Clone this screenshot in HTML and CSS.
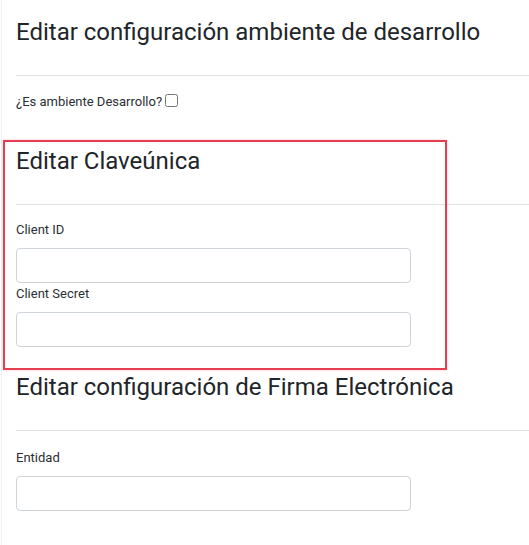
FILE: index.html
```html
<!DOCTYPE html>
<html lang="es">
<head>
<meta charset="utf-8">
<title>Configuración</title>
<link rel="stylesheet" href="styles.css">
</head>
<body>
<div class="page">
  <section class="section section-dev">
    <h2 class="section-title">Editar configuración ambiente de desarrollo</h2>
    <hr class="divider">
    <div class="check-row">
      <label class="field-label" for="esDev">¿Es ambiente Desarrollo?</label>
      <input class="check" type="checkbox" id="esDev">
    </div>
  </section>

  <section class="section section-clave">
    <h2 class="section-title">Editar Claveúnica</h2>
    <hr class="divider">
    <div class="field">
      <label class="field-label" for="clientId">Client ID</label>
      <input class="text-input" type="text" id="clientId">
    </div>
    <div class="field">
      <label class="field-label" for="clientSecret">Client Secret</label>
      <input class="text-input" type="text" id="clientSecret">
    </div>
  </section>

  <section class="section section-firma">
    <h2 class="section-title">Editar configuración de Firma Electrónica</h2>
    <hr class="divider">
    <div class="field">
      <label class="field-label" for="entidad">Entidad</label>
      <input class="text-input" type="text" id="entidad">
    </div>
  </section>

  <div class="highlight"></div>
</div>
</body>
</html>
```

FILE: styles.css
```css
* {
  box-sizing: border-box;
}

html, body {
  margin: 0;
  padding: 0;
  background: #ffffff;
  overflow: hidden;
}

body {
  font-family: Roboto, "Liberation Sans", sans-serif;
  color: #212529;
}

.page {
  position: relative;
  margin-left: 1px;
  border-left: 1px solid #f0f0f0;
  padding-left: 14px;
  min-height: 545px;
}

.section-title {
  margin: 0;
  font-size: 24px;
  font-weight: 400;
  line-height: 29px;
  color: #212529;
}

.divider {
  margin: 28px -20px 0 0;
  border: 0;
  border-top: 1px solid #e3e3e3;
}

.section-dev {
  padding-top: 18px;
}

.section-clave {
  padding-top: 35px;
}

.section-firma {
  padding-top: 26px;
}

.check-row {
  display: flex;
  align-items: flex-start;
  margin-top: 16px;
  height: 20px;
}

.check {
  width: 13px;
  height: 13px;
  margin: 2px 0 0 3px;
}

.field-label {
  display: block;
  font-size: 13px;
  line-height: 20px;
  color: #2b2f33;
}

.check-row .field-label {
  display: inline-block;
}

.field {
  display: flex;
  flex-direction: column;
  align-items: flex-start;
  margin-top: 15px;
}

.field + .field {
  margin-top: 1px;
}

.section-firma .field {
  margin-top: 17px;
}

.text-input {
  display: block;
  width: 395px;
  height: 35px;
  margin-top: 8px;
  border: 1px solid #ced4da;
  border-radius: 4px;
  background: #fff;
  font-family: inherit;
  font-size: 13px;
  padding: 6px 12px;
}

.highlight {
  position: absolute;
  left: 1px;
  top: 140px;
  width: 444px;
  height: 230px;
  border: 2px solid #e63e51;
  box-shadow: 0 0 2px rgba(230, 62, 81, 0.35);
  pointer-events: none;
}
```
